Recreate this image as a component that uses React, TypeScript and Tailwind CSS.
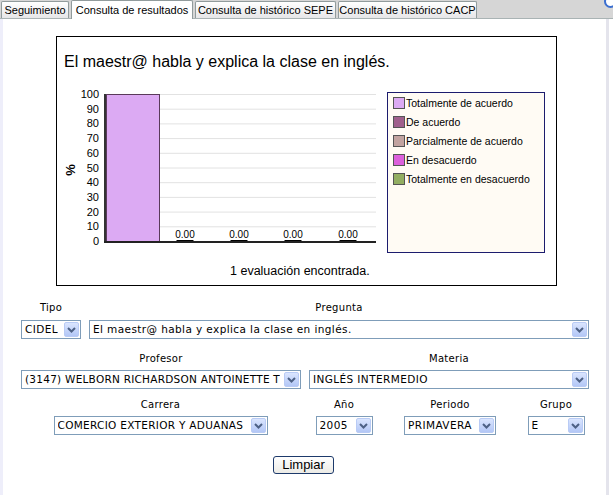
import React from "react";

const Arrow = () => (
  <div className="ml-auto flex h-[15px] w-[15px] shrink-0 items-center justify-center rounded-[2px] border border-[#b9cbf5] bg-gradient-to-b from-[#dae5fe] to-[#b3c7f6]">
    <svg width="9" height="6" viewBox="0 0 9 6">
      <path d="M1 1 L4.5 4.5 L8 1" stroke="#4d6185" strokeWidth="2" fill="none" />
    </svg>
  </div>
);

const Select = ({ text, className }: { text: string; className: string }) => (
  <div
    className={
      "flex h-[19px] items-center border border-[#7f9db9] bg-white pl-[3px] pr-px font-['DejaVu_Sans',Verdana,sans-serif] text-[10.5px] text-black " +
      className
    }
  >
    <span className="overflow-hidden whitespace-nowrap">{text}</span>
    <Arrow />
  </div>
);

const Label = ({ children }: { children: React.ReactNode }) => (
  <div className="h-[12px] text-center font-['DejaVu_Sans',Verdana,sans-serif] text-[10px] leading-[12px] tracking-[0.3px] text-black">
    {children}
  </div>
);

const legend = [
  { c: "bg-[#dcaaf3]", t: "Totalmente de acuerdo" },
  { c: "bg-[#a0608c]", t: "De acuerdo" },
  { c: "bg-[#c2a3a0]", t: "Parcialmente de acuerdo" },
  { c: "bg-[#dc60dc]", t: "En desacuerdo" },
  { c: "bg-[#93ae62]", t: "Totalmente en desacuerdo" },
];

const Chart = () => {
  const ticks = [100, 90, 80, 70, 60, 50, 40, 30, 20, 10, 0];
  const y = (v: number) => 8 + (100 - v) * 1.47;
  const zeroCenters = [128, 182, 236, 291];
  return (
    <svg width="330" height="165" viewBox="0 0 330 165" className="shrink-0">
      {ticks.map((v) => (
        <line key={"g" + v} x1="47" x2="319" y1={y(v) + 0.5} y2={y(v) + 0.5} stroke="#e2e2e2" strokeWidth="1" />
      ))}
      {ticks.map((v) => (
        <text
          key={"t" + v}
          x="42"
          y={y(v) + 4}
          textAnchor="end"
          fontFamily="Liberation Sans, Arial, sans-serif"
          fontSize="11"
          fill="#000"
        >
          {v}
        </text>
      ))}
      <text
        x="0"
        y="0"
        transform="translate(18 84) rotate(-90)"
        textAnchor="middle"
        fontFamily="Liberation Sans, Arial, sans-serif"
        fontSize="13"
        fontWeight="bold"
        fill="#000"
      >
        %
      </text>
      <rect x="49.5" y="8.5" width="53" height="147" fill="#dcaaf3" stroke="#5a3a5a" strokeWidth="1" />
      {zeroCenters.map((cx) => (
        <g key={cx}>
          <text
            x={cx}
            y="152"
            textAnchor="middle"
            fontFamily="Liberation Sans, Arial, sans-serif"
            fontSize="10"
            fill="#000"
          >
            0.00
          </text>
          <line x1={cx - 8.5} x2={cx + 8.5} y1="154.5" y2="154.5" stroke="#000" strokeWidth="1" />
        </g>
      ))}
      <line x1="48" x2="48" y1="8" y2="157" stroke="#333" strokeWidth="2" />
      <line x1="47" x2="319" y1="156" y2="156" stroke="#222" strokeWidth="2" />
    </svg>
  );
};

export default function App() {
  const font = "font-['Liberation_Sans',Arial,sans-serif]";
  return (
    <div className={"relative flex h-[495px] w-[613px] flex-col overflow-hidden bg-white " + font}>
      {/* Tab bar */}
      <div className="flex h-[19px] shrink-0 items-end border-b border-[#a9b3b4] bg-[#d6d6d6] pl-px">
        <div className="mr-[2px] flex h-[17px] w-[68px] items-center justify-center rounded-t-[2px] border border-b-0 border-[#919b9c] bg-gradient-to-b from-white to-[#e6e6e8] text-[11px] text-black">
          Seguimiento
        </div>
        <div className="relative -mb-px mr-[2px] flex h-[19px] w-[122px] items-center justify-center rounded-t-[2px] border border-b-0 border-[#919b9c] bg-white text-[11px] text-black">
          Consulta de resultados
        </div>
        <div className="mr-[2px] flex h-[17px] w-[141px] items-center justify-center rounded-t-[2px] border border-b-0 border-[#919b9c] bg-gradient-to-b from-white to-[#e6e6e8] text-[11px] text-black">
          Consulta de histórico SEPE
        </div>
        <div className="flex h-[17px] w-[139px] items-center justify-center rounded-t-[2px] border border-b-0 border-[#919b9c] bg-gradient-to-b from-white to-[#e6e6e8] text-[11px] text-black">
          Consulta de histórico CACP
        </div>
      </div>
      <div className="absolute right-[-4px] top-[-5px] h-[13px] w-[13px] rounded-full border-2 border-[#3b6fd0] bg-white" />

      {/* Body */}
      <div className="flex flex-1">
        <div className="w-[3px] bg-[#eeeefa]" />
        <div className="flex-1 bg-white">
          {/* Chart box */}
          <div className="ml-[53px] mt-[17px] h-[250px] w-[501px] border border-black bg-white">
            <div className="pl-[7px] pt-[16px] text-[16px] leading-[18px] text-black">
              El maestr@ habla y explica la clase en inglés.
            </div>
            <div className="mt-[15px] flex">
              <Chart />
              <div className="mt-[6px] h-[161px] w-[158px] border border-[#1c1c6e] bg-[#fffbf4] pl-[5px] pt-[4px]">
                {legend.map((l) => (
                  <div key={l.t} className="mb-[7px] flex h-[12px] items-center">
                    <div className={"h-[12px] w-[12px] shrink-0 border border-[#555] " + l.c} />
                    <span className="ml-px whitespace-nowrap text-[10.5px] leading-[12px] text-black">{l.t}</span>
                  </div>
                ))}
              </div>
            </div>
            <div className="mt-[11px] pl-[173px] text-[12.5px] leading-[14px] text-black">
              1 evaluación encontrada.
            </div>
          </div>

          {/* Form */}
          <div className="mt-[16px] flex gap-[8px] pl-[18px]">
            <div className="w-[60px]">
              <Label>Tipo</Label>
              <Select text="CIDEL" className="mt-[6px] w-[60px] tracking-[0.4px]" />
            </div>
            <div className="w-[500px]">
              <Label>Pregunta</Label>
              <Select
                text="El maestr@ habla y explica la clase en inglés."
                className="mt-[6px] w-[500px] tracking-[0.4px]"
              />
            </div>
          </div>
          <div className="mt-[14px] flex gap-[8px] pl-[18px]">
            <div className="w-[280px]">
              <Label>Profesor</Label>
              <Select
                text="(3147) WELBORN RICHARDSON ANTOINETTE T"
                className="mt-[5px] w-[280px] tracking-[0.25px]"
              />
            </div>
            <div className="w-[280px]">
              <Label>Materia</Label>
              <Select text="INGLÉS INTERMEDIO" className="mt-[5px] w-[280px] tracking-[0.4px]" />
            </div>
          </div>
          <div className="mt-[10px] flex pl-[18px]">
            <div className="flex w-[279px] flex-col items-center">
              <Label>Carrera</Label>
              <Select text="COMERCIO EXTERIOR Y ADUANAS" className="mt-[5px] w-[214px] tracking-[0.3px]" />
            </div>
            <div className="flex w-[88px] flex-col items-center">
              <Label>Año</Label>
              <Select text="2005" className="mt-[5px] w-[57px] tracking-[0.4px]" />
            </div>
            <div className="flex w-[124px] flex-col items-center">
              <Label>Periodo</Label>
              <Select text="PRIMAVERA" className="mt-[5px] w-[92px] tracking-[0.4px]" />
            </div>
            <div className="flex w-[88px] flex-col items-center">
              <Label>Grupo</Label>
              <Select text="E" className="mt-[5px] w-[57px] tracking-[0.4px]" />
            </div>
          </div>
          <div className="mt-[21px] flex justify-center pr-[2px]">
            <button className="h-[18px] w-[61px] rounded-[3px] border border-[#1d3a6b] bg-gradient-to-b from-white to-[#ecebe6] text-[13px] leading-[14px] text-black">
              Limpiar
            </button>
          </div>
        </div>
        <div className="w-[3px] bg-[#e4e4ec]" />
        <div className="w-[4px] bg-white" />
      </div>
    </div>
  );
}
